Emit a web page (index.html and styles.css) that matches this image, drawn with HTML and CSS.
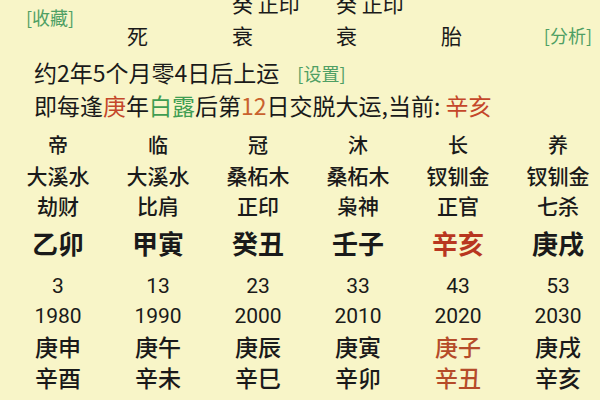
FILE: index.html
```html
<!DOCTYPE html>
<html lang="zh">
<head>
<meta charset="utf-8">
<link rel="stylesheet" href="styles.css">
</head>
<body>
<div class="page">
  <div class="head">
    <div class="tag fav">[收藏]</div>
    <div class="c3 r1">癸 正印</div>
    <div class="c4 r1">癸 正印</div>
    <div class="c2 r2">死</div>
    <div class="c3 r2">衰</div>
    <div class="c4 r2">衰</div>
    <div class="c5 r2">胎</div>
    <div class="c6 r2 tag ana">[分析]</div>
  </div>
  <div class="line">约2年5个月零4日后上运<span class="tag set">[设置]</span></div>
  <div class="line">即每逢<span class="red">庚</span>年<span class="green">白露</span>后第<span class="orange">12</span>日交脱大运,当前: <span class="red">辛亥</span></div>

  <div class="grid">
    <div class="row r-a"><span>帝</span><span>临</span><span>冠</span><span>沐</span><span>长</span><span>养</span></div>
    <div class="row r-b"><span>大溪水</span><span>大溪水</span><span>桑柘木</span><span>桑柘木</span><span>钗钏金</span><span>钗钏金</span></div>
    <div class="row r-c"><span>劫财</span><span>比肩</span><span>正印</span><span>枭神</span><span>正官</span><span>七杀</span></div>
    <div class="row big"><span>乙卯</span><span>甲寅</span><span>癸丑</span><span>壬子</span><span class="dred">辛亥</span><span>庚戌</span></div>
    <div class="row r-e num"><span>3</span><span>13</span><span>23</span><span>33</span><span>43</span><span>53</span></div>
    <div class="row r-f num"><span>1980</span><span>1990</span><span>2000</span><span>2010</span><span>2020</span><span>2030</span></div>
    <div class="row r-g"><span>庚申</span><span>庚午</span><span>庚辰</span><span>庚寅</span><span class="brown">庚子</span><span>庚戌</span></div>
    <div class="row r-h"><span>辛酉</span><span>辛未</span><span>辛巳</span><span>辛卯</span><span class="brown">辛丑</span><span>辛亥</span></div>
  </div>
</div>
</body>
</html>
```

FILE: styles.css
```css
html, body {
  margin: 0;
  padding: 0;
  background: #f8f5c8;
  overflow: hidden;
}
body {
  width: 600px;
  height: 400px;
  font-family: "Noto Sans CJK SC", "Noto Sans", sans-serif;
  font-weight: 400;
  color: #1a1a1a;
}
.page {
  margin-top: -12px;
}
.head {
  display: grid;
  grid-template-columns: 127px 105px 104px 105px 80px 1fr;
  grid-template-rows: 30px 34px;
  font-size: 21px;
}
.head > div {
  line-height: 30px;
  align-self: center;
}
.r1 { grid-row: 1; }
.r2 { grid-row: 2; }
.c2 { grid-column: 2; }
.c3 { grid-column: 3; }
.c4 { grid-column: 4; }
.c5 { grid-column: 5; }
.c6 { grid-column: 6; justify-self: end; padding-right: 8px; }
.tag {
  color: #4f9f64;
  font-size: 18px;
  font-weight: 400;
}
.fav {
  grid-column: 1;
  grid-row: 1 / 3;
  padding-left: 26px;
  margin-bottom: 6px;
}
.line {
  font-size: 23px;
  line-height: 32px;
  padding-left: 34px;
}
.head + .line {
  margin-top: 4px;
}
.set {
  margin-left: 18px;
  vertical-align: 1px;
}
.red { color: #c4472a; }
.orange { color: #c9622e; }
.green { color: #3f9d52; }
.dred { color: #b8361f; }
.brown { color: #b54b29; }

.grid {
  margin-top: 8px;
  padding-left: 8px;
}
.row {
  display: grid;
  grid-template-columns: repeat(6, 100px);
  text-align: center;
  font-size: 21px;
  line-height: 30px;
  font-weight: 500;
}
.r-a { line-height: 31px; font-size: 20px; }
.big {
  font-size: 26px;
  font-weight: bold;
  line-height: 46px;
}
.num { font-family: Roboto, "Noto Sans CJK SC", sans-serif; font-weight: 400; }
.r-e { margin-top: 5px; font-size: 21px; }
.r-f { font-size: 21px; }
.r-g { font-size: 23px; line-height: 31px; }
.r-h { font-size: 23px; }
```
